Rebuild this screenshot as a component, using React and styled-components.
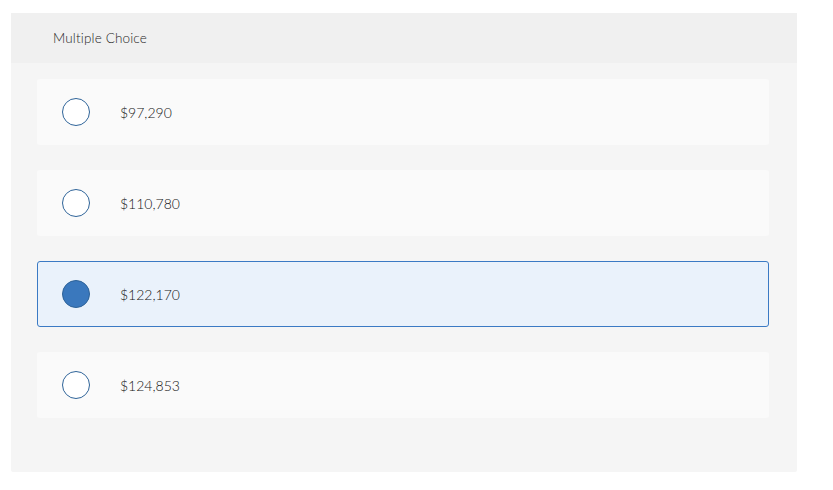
import React, { useState } from 'react';
import styled, { createGlobalStyle } from 'styled-components';

const GlobalStyle = createGlobalStyle`
  body {
    margin: 0;
    background: #ffffff;
    font-family: Lato, 'Open Sans', sans-serif;
  }
`;

const choices = ['$97,290', '$110,780', '$122,170', '$124,853'];

const App = () => {
  const [selected, setSelected] = useState(2);

  return (
    <Page>
      <GlobalStyle />
      <Panel>
        <Header>Multiple Choice</Header>
        <OptionList>
          {choices.map((label, i) => (
            <Option key={label} active={i === selected} onClick={() => setSelected(i)}>
              <Radio active={i === selected} />
              <Label>{label}</Label>
            </Option>
          ))}
        </OptionList>
      </Panel>
    </Page>
  );
};

const Page = styled.div`
  padding: 13px 36px 0 11px;
`;

const Panel = styled.div`
  width: 786px;
  background: #f5f5f5;
  border-radius: 2px;
  padding-bottom: 54px;
`;

const Header = styled.div`
  height: 50px;
  display: flex;
  align-items: center;
  padding-left: 42px;
  background: #f0f0f0;
  color: #1e1e1e;
  font-size: 13.5px;
  font-weight: 300;
  letter-spacing: 0.15px;
`;

const OptionList = styled.div`
  display: flex;
  flex-direction: column;
  gap: 25px;
  padding: 16px 28px 0 26px;
`;

const Option = styled.div`
  height: 66px;
  box-sizing: border-box;
  display: flex;
  align-items: center;
  padding-left: 24px;
  border-radius: 3px;
  background: ${p => (p.active ? '#eaf2fb' : '#fafafa')};
  border: 1px solid ${p => (p.active ? '#3b7ac4' : 'transparent')};
  cursor: pointer;
`;

const Radio = styled.span`
  width: 28px;
  height: 28px;
  box-sizing: border-box;
  border-radius: 50%;
  border: 1px solid ${p => (p.active ? '#2d6298' : '#2f6499')};
  background: ${p => (p.active ? '#3a78bd' : '#ffffff')};
  flex-shrink: 0;
`;

const Label = styled.span`
  margin-left: 30px;
  font-size: 14px;
  font-weight: 300;
  color: #141414;
`;

export default App;
